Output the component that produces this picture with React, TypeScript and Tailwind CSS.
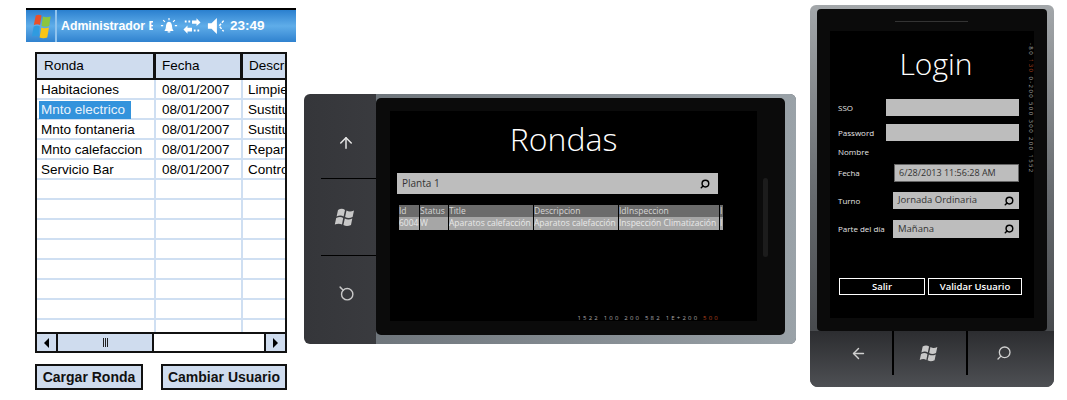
import React from 'react';
import { ArrowUp, ArrowLeft, Search } from 'lucide-react';

const rondas = [
  ['Habitaciones', '08/01/2007', 'Limpieza'],
  ['Mnto electrico', '08/01/2007', 'Sustitucion'],
  ['Mnto fontaneria', '08/01/2007', 'Sustitucion'],
  ['Mnto calefaccion', '08/01/2007', 'Reparacion'],
  ['Servicio Bar', '08/01/2007', 'Control'],
  ['', '', ''], ['', '', ''], ['', '', ''], ['', '', ''], ['', '', ''], ['', '', ''], ['', '', ''],
];

const columnas = [
  { t: 'Id', v: '6004', w: 'w-[20px]' },
  { t: 'Status', v: 'W', w: 'w-[28px]' },
  { t: 'Title', v: 'Aparatos calefacción', w: 'w-[84px]' },
  { t: 'Descripcion', v: 'Aparatos calefacción', w: 'w-[84px]' },
  { t: 'IdInspeccion', v: 'Inspección Climatización', w: 'w-[100px]' },
  { t: 'I', v: 'I', w: 'w-[3px]' },
];

function WinFlag({ className }: { className?: string }) {
  return (
    <svg viewBox="0 0 24 24" className={className} fill="currentColor">
      <path d="M4 5c2.500-1.600 5-1.600 7 0l-1.400 6.400c-2-1.300-4.400-1.300-7 0z" />
      <path d="M12.500 5.500c2.200 1.300 4.600 1.300 7.500 0l-1.400 6.500c-2.700 1.300-5.200 1.300-7.500 0z" />
      <path d="M2.200 13c2.600-1.300 5-1.300 7 0L8 19.600c-2-1.300-4.500-1.300-7.200 0z" />
      <path d="M10.800 13.500c2.300 1.300 4.800 1.300 7.500 0L17 20c-2.900 1.300-5.300 1.300-7.600 0z" />
    </svg>
  );
}

function ColorFlag() {
  return (
    <svg viewBox="0 0 24 26" className="h-[26px] w-[23px]">
      <path d="M6 2c2-1 4-1 6 0l-1.500 10c-2-1-4-1-6.500 0z" fill="#e8502a" />
      <path d="M13.500 3c2.500 1 5 1 8 0L20 13c-3 1-5.500 1-8 0z" fill="#8cc63f" />
      <path d="M3.800 13.500c2.200-1 4.500-1 6.500 0L8.800 24c-2-1-4.500-1-6.800 0z" fill="#2f9be0" />
      <path d="M11.800 14.500c2.500 1 5 1 8 0L18 25c-3 1-5.500 1-8 0z" fill="#f8c516" />
    </svg>
  );
}

function SearchBox({ text, className }: { text: string; className: string }) {
  return (
    <div className={`flex items-center justify-between bg-[#bdbdbd] text-[#333] ${className}`}>
      <span>{text}</span>
      <Search className="h-[10px] w-[10px] -scale-x-100 text-black" strokeWidth={3.500} />
    </div>
  );
}

function PocketPc() {
  return (
    <div className="absolute left-[26px] top-[8px] w-[270px] font-['Liberation_Sans',sans-serif]">
      <div className="flex h-[34px] w-[270px] items-center border-t-2 border-black bg-gradient-to-b from-[#2a80cf] via-[#5fade9] to-[#2f82cf] pl-[4px] font-bold text-white">
        <ColorFlag />
        <div className="ml-[2px] mr-[4px] h-full w-[2px] bg-[#8fc3ee]" />
        <span className="w-[92px] overflow-hidden whitespace-nowrap text-[12.300px] leading-none">Administrador E</span>
        <svg viewBox="0 0 20 20" className="ml-[7px] h-[18px] w-[18px]" fill="none" stroke="#fff" strokeWidth="1.300">
          <path d="M6 15c1.500-2 1-4 1.500-6S9 6 10 6s2 1 2.500 3 0 4 1.500 6z" fill="#fff" />
          <path d="M8.500 16.500h3M10 1v2.500M3.500 3.500l2 2M16.500 3.500l-2 2M1 9.500h2.500M19 9.500h-2.500" />
        </svg>
        <svg viewBox="0 0 20 20" className="ml-[5px] h-[18px] w-[18px]" fill="#fff">
          <path d="M10 4h5V1.500L19.500 6 15 10V7.500h-5zM10 12H5V9.500L.5 14 5 18.500V16h5z" />
          <path d="M2 4h2v2H2zM6 4h2v2H6zM12 14h2v2h-2zM16 14h2v2h-2z" />
        </svg>
        <svg viewBox="0 0 20 20" className="ml-[6px] h-[18px] w-[18px]" fill="#fff">
          <path d="M1 7h4l6-6v18l-6-6H1z" />
          <path d="M18.500 4 13.500 10l5 6" fill="none" stroke="#fff" strokeWidth="1.600" strokeDasharray="3 1.500" />
        </svg>
        <span className="ml-[5px] text-[13.500px] leading-none">23:49</span>
      </div>

      <div className="ml-[9px] mt-[10px] w-[252px] border-2 border-[#111] bg-white text-[13.500px] leading-none text-black">
        <div className="flex h-[26px] border-b-2 border-[#111] bg-[#cfdcee]">
          <div className="flex w-[119px] items-center border-r-[3px] border-[#111] pl-[7px]">Ronda</div>
          <div className="flex w-[87px] items-center border-r-[3px] border-[#111] pl-[6px]">Fecha</div>
          <div className="flex w-[42px] items-center overflow-hidden whitespace-nowrap pl-[6px]">Descripcion</div>
        </div>
        {rondas.map((r, i) => (
          <div key={i} className="flex h-[20px] whitespace-nowrap border-b-2 border-[#cfdff2]">
            <div className="flex w-[119px] items-center border-r-2 border-[#cfdff2] pl-[4px] pt-[2px]">
              <span className={i === 1 ? '-ml-[2px] w-[92px] bg-[#3393dc] pl-[2px] leading-[18px] text-[#e8f2fb]' : ''}>{r[0]}</span>
            </div>
            <div className="flex w-[87px] items-center border-r-2 border-[#cfdff2] pl-[6px] pt-[2px]">{r[1]}</div>
            <div className="flex w-[42px] items-center overflow-hidden pl-[5px] pt-[2px]">{r[2]}</div>
          </div>
        ))}
        <div className="flex h-[14px] border-b-2 border-[#111]">
          <div className="w-[119px] border-r-2 border-[#cfdff2]" />
          <div className="w-[87px] border-r-2 border-[#cfdff2]" />
        </div>
        <div className="flex h-[17px]">
          <div className="flex w-[21px] items-center justify-center border-r-2 border-[#111] bg-[#cfdcee]">
            <div className="h-0 w-0 border-y-[5px] border-r-[5px] border-y-transparent border-r-black" />
          </div>
          <div className="flex w-[96px] items-center justify-center gap-[1px] border-r-2 border-[#111] bg-[#cfdcee]">
            <div className="h-[9px] w-px bg-[#222]" /><div className="h-[9px] w-px bg-[#222]" /><div className="h-[9px] w-px bg-[#222]" />
          </div>
          <div className="flex-1" />
          <div className="flex w-[21px] items-center justify-center border-l-2 border-[#111] bg-[#cfdcee]">
            <div className="h-0 w-0 border-y-[5px] border-l-[5px] border-y-transparent border-l-black" />
          </div>
        </div>
      </div>

      <div className="ml-[9px] mt-[11px] flex w-[252px] justify-between text-[14px] font-bold leading-none text-[#111]">
        <div className="flex h-[26px] w-[108px] items-center justify-center border-2 border-[#111] bg-[#cfdcee]">Cargar Ronda</div>
        <div className="flex h-[26px] w-[126px] items-center justify-center border-2 border-[#111] bg-[#cfdcee]">Cambiar Usuario</div>
      </div>
    </div>
  );
}

function RondasPhone() {
  return (
    <div className="absolute left-[304px] top-[94px] flex h-[250px] w-[492px] overflow-hidden rounded-[6px] bg-gradient-to-r from-[#35363a] to-[#54565a] font-['Open_Sans',sans-serif]">
      <div className="flex w-[72px] flex-col text-[#e5e5e5]">
        <div className="flex h-[84px] items-center justify-center pl-[12px] pt-[14px]">
          <ArrowUp className="h-[18px] w-[18px]" strokeWidth={2} />
        </div>
        <div className="ml-[17px] h-px bg-black" />
        <div className="flex h-[76px] items-center justify-center pl-[12px]">
          <WinFlag className="h-[24px] w-[24px] text-[#c8c8c8]" />
        </div>
        <div className="ml-[17px] h-px bg-black" />
        <div className="flex flex-1 items-center justify-center pb-[14px] pl-[12px]">
          <Search className="h-[17px] w-[17px] rotate-[180deg] text-[#c8c8c8]" strokeWidth={2} />
        </div>
      </div>
      <div className="flex flex-1 flex-col bg-gradient-to-r from-[#6f767c] to-[#9aa2a8] pb-[9px] pr-[11px] pt-[4px]">
        <div className="relative flex-1 rounded-[5px] bg-[#0b0b0b] pb-[14px] pl-[14px] pr-[28px] pt-[13px]">
          <div className="h-full w-[367px] bg-black px-[7px] text-white">
            <div className="flex h-[62px] items-center justify-center pb-[6px] pr-[20px] text-[32px] font-light leading-none">Rondas</div>
            <SearchBox text="Planta 1" className="h-[21px] w-[321px] pl-[5px] pr-[8px] text-[10px]" />
            <div className="ml-[2px] mt-[11px] text-[8.500px] leading-none">
              <div className="flex h-[12px] gap-px">
                {columnas.map((c) => (
                  <div key={c.t} className={`${c.w} overflow-hidden whitespace-nowrap bg-[#6b6b6b] pt-[2px] text-[#d6d6d6]`}>{c.t}</div>
                ))}
              </div>
              <div className="flex h-[13px] gap-px">
                {columnas.map((c) => (
                  <div key={c.t} className={`${c.w} overflow-hidden whitespace-nowrap bg-[#a6a6a6] pt-[2px] text-[#e8e8e8]`}>{c.v}</div>
                ))}
              </div>
            </div>
            <div className="mt-[85px] flex justify-end pr-[30px] text-[6px] leading-none tracking-[2.200px] text-[#a8a8a8]">
              <span className="whitespace-nowrap">1522 100 200 582 1E+200 <span className="text-[#b0421f]">500</span></span>
            </div>
          </div>
          <div className="absolute right-[17px] top-[80px] h-[79px] w-[5px] rounded-sm bg-[#1c1c1c]" />
        </div>
      </div>
    </div>
  );
}

function Fila({ label, children }: { label: string; children?: React.ReactNode }) {
  return (
    <div className="flex items-center">
      <span className="w-[48px] whitespace-nowrap text-[8px] leading-none text-[#e5e5e5]">{label}</span>
      {children}
    </div>
  );
}

function LoginPhone() {
  return (
    <div className="absolute left-[810px] top-[5px] flex h-[382px] w-[244px] flex-col overflow-hidden rounded-b-[8px] rounded-t-[6px] bg-gradient-to-b from-[#a3a7aa] via-[#666a6e] to-[#3c3e41] font-['Open_Sans',sans-serif]">
      <div className="relative mx-[7px] mt-[4px] flex h-[322px] justify-center rounded-[4px] bg-[#0b0b0b] pt-[22px]">
        <div className="absolute left-[78px] top-[12px] h-px w-[73px] bg-[#333]" />
        <div className="relative h-[287px] w-[204px] bg-black pl-[8px] text-white">
          <div className="flex h-[68px] items-center justify-center pb-[2px] text-[30px] font-light leading-none">Login</div>
          <Fila label="SSO"><div className="h-[17px] w-[133px] bg-[#bdbdbd]" /></Fila>
          <div className="mt-[8px]"><Fila label="Password"><div className="h-[17px] w-[133px] bg-[#bdbdbd]" /></Fila></div>
          <div className="mt-[7px]"><Fila label="Nombre" /></div>
          <div className="mt-[8px]">
            <Fila label="Fecha">
              <div className="ml-[8px] flex h-[18px] w-[125px] items-center border border-[#666] bg-[#bdbdbd] pl-[4px] text-[9px] text-[#333]">6/28/2013 11:56:28 AM</div>
            </Fila>
          </div>
          <div className="mt-[10px]">
            <Fila label="Turno"><SearchBox text="Jornada Ordinaria" className="ml-[7px] h-[17px] w-[126px] px-[5px] text-[9.500px]" /></Fila>
          </div>
          <div className="mt-[11px]">
            <Fila label="Parte del día"><SearchBox text="Mañana" className="ml-[7px] h-[18px] w-[126px] px-[5px] text-[9.500px]" /></Fila>
          </div>
          <div className="mt-[40px] flex gap-[3px] text-[9.500px] font-semibold leading-none">
            <div className="ml-px flex h-[17px] w-[86px] items-center justify-center border border-white">Salir</div>
            <div className="flex h-[17px] w-[94px] items-center justify-center border border-white">Validar Usuario</div>
          </div>
          <div className="absolute right-[0px] top-[12px] whitespace-nowrap text-[6px] leading-none tracking-[1.400px] text-[#a8a8a8] [writing-mode:vertical-rl]">
            -80 <span className="text-[#b0421f]">130</span> 0-200 500 300 200 1552
          </div>
        </div>
      </div>
      <div className="flex flex-1 bg-gradient-to-b from-[#2c2d30] to-[#4e5054] pb-[12px] text-[#d0d0d0]">
        <div className="flex w-[84px] items-center justify-center border-r-2 border-black pl-[14px]">
          <ArrowLeft className="h-[17px] w-[17px]" strokeWidth={2} />
        </div>
        <div className="flex w-[74px] items-center justify-center border-r-2 border-black">
          <WinFlag className="h-[22px] w-[24px] text-[#c8c8c8]" />
        </div>
        <div className="flex flex-1 items-center justify-center pr-[14px]">
          <Search className="h-[16px] w-[16px] -scale-x-100" strokeWidth={2} />
        </div>
      </div>
    </div>
  );
}

export default function App() {
  return (
    <div className="relative h-[400px] w-[1067px] overflow-hidden bg-white">
      <PocketPc />
      <RondasPhone />
      <LoginPhone />
    </div>
  );
}
